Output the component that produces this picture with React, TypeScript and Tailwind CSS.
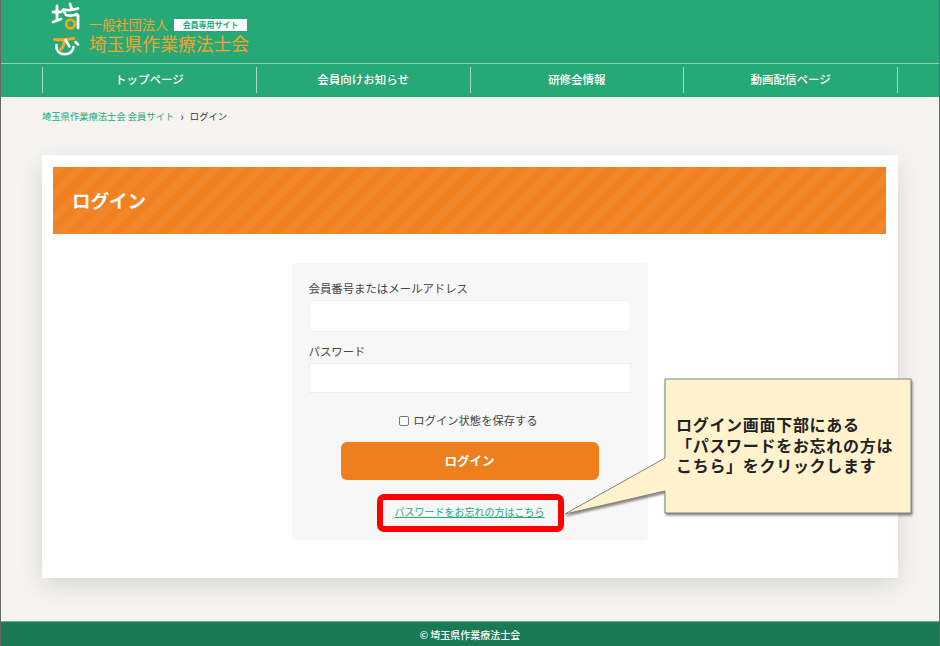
const jp = "font-['Noto_Sans_CJK_JP','Noto_Sans','Liberation_Sans',sans-serif]";

function Logo() {
  return (
    <svg width="30" height="56" viewBox="0 0 30 56" fill="none" className="shrink-0">
      <g stroke="#ffffff" strokeWidth="2.800" strokeLinecap="round" strokeLinejoin="round">
        <path d="M2 10h8M6 4v14M2 20l8-3" />
        <path d="M13 7.500c4 1 9 .5 14-1M19 2l2 5.500M15 13c4 1 8 .5 11-.5M12 8l2 3M25 12l2 2" />
        <path d="M27 14v12" />
      </g>
      <circle cx="19.500" cy="22" r="4.300" stroke="#f5a623" strokeWidth="2.800" />
      <g stroke="#f5a623" strokeWidth="3" strokeLinecap="round">
        <path d="M3.500 37.500c6 .5 13 0 19-1" />
        <path d="M13 37.500c.5 5-.5 8-3.500 10" />
      </g>
      <path d="M14.500 38l4 6.500" stroke="#fff" strokeWidth="2.400" strokeLinecap="round" />
      <path d="M5.500 43c-1 8 6 10.500 12 8.500 3-1 4.500-3.500 5-6.500M24.500 40l2.500 2.500" stroke="#fff" strokeWidth="2.600" strokeLinecap="round" />
    </svg>
  );
}

export default function App() {
  const nav = ["トップページ", "会員向けお知らせ", "研修会情報", "動画配信ページ"];
  return (
    <div className={`${jp} relative flex h-[646px] w-[940px] flex-col overflow-hidden border-x border-[#666] bg-[#f5f4f0] text-[#333]`}>
      <header className="flex h-[63px] items-start bg-[#27a877] pl-[50px] pt-[2px]">
        <Logo />
        <div className="ml-[8px] mt-[15px] flex flex-col">
          <div className="flex items-center">
            <span className="text-[13.200px] leading-[16px] text-[#f3a42c]">一般社団法人</span>
            <span className="ml-[6px] flex h-[12px] w-[73px] items-center justify-center bg-white text-[8px] font-bold text-[#27a877]">会員専用サイト</span>
          </div>
          <span className="mt-[-2px] text-[17.800px] leading-[24px] text-[#f3a42c]">埼玉県作業療法士会</span>
        </div>
      </header>
      <nav className="flex h-[34px] items-center justify-center border-y border-t-[#8fd0b5] border-b-[#27a877] bg-[#27a877]">
        <div className="flex h-[26px] w-[856px] border-r border-[#a9d9c5]">
          {nav.map((n) => (
            <a key={n} className="flex flex-1 items-center justify-center border-l border-[#a9d9c5] text-[11.500px] font-medium text-white">{n}</a>
          ))}
        </div>
      </nav>
      <main className="flex flex-1 flex-col px-[41px]">
        <div className="flex h-[58px] items-center pb-[19px] text-[9.300px]">
          <span className="text-[#27a877]">埼玉県作業療法士会 会員サイト</span>
          <span className="mx-[6px] text-[11px] font-bold leading-none text-[#555]">›</span>
          <span>ログイン</span>
        </div>
        <section className="flex h-[423px] flex-col items-center bg-white pl-[11px] pr-[12px] pt-[12px] shadow-[0_8px_24px_rgba(0,0,0,0.12)]">
          <div className="flex h-[67px] w-full items-center bg-[#f08020] bg-[repeating-linear-gradient(135deg,rgba(255,255,255,0.05)_0,rgba(255,255,255,0.05)_8px,transparent_8px,transparent_16px)] pl-[19px] text-[18.500px] font-bold text-white">ログイン</div>
          <div className="mt-[29px] flex h-[277px] w-[356px] flex-col rounded-[5px] bg-[#f7f7f7] px-[17px] pt-[17px]">
            <label className="text-[11.400px] leading-[17px] text-[#444]">会員番号またはメールアドレス</label>
            <div className="mt-[3px] h-[32px] rounded-[5px] border border-[#eeeeee] bg-white" />
            <label className="mt-[11px] text-[11.400px] leading-[17px] text-[#444]">パスワード</label>
            <div className="mt-[3px] h-[30px] border border-[#eeeeee] bg-white" />
            <div className="mt-[19px] flex items-center justify-center pr-[2px] text-[11.300px] leading-[17px] text-[#444]">
              <span className="mr-[4px] h-[10px] w-[10px] rounded-[2px] border border-[#777] bg-white" />
              ログイン状態を保存する
            </div>
            <button className="mx-auto mt-[13px] h-[38px] w-[258px] rounded-[6px] bg-[#ef7e1d] pt-[1px] text-[12.500px] font-bold text-white">ログイン</button>
            <a className="mt-[24px] text-center text-[10px] leading-[15px] text-[#27a877] underline">パスワードをお忘れの方はこちら</a>
          </div>
        </section>
      </main>
      <footer className="flex h-[25px] items-center justify-center border-t border-[#6fa98f] bg-[#1a7a56] text-[10px] font-medium text-white">© 埼玉県作業療法士会</footer>

      <div className="absolute left-[376px] top-[494px] h-[38px] w-[187px] rounded-[7px] border-[6px] border-[#ff0000]" />
      <svg className="absolute left-[555px] top-[370px] overflow-visible" width="370" height="160" fill="none">
        <path d="M9 144 L109 88 L109 9 L355 9 L355 143 L109 143 L109 121 Z" fill="#fff2cc" stroke="#808080" strokeWidth="1" style={{ filter: "drop-shadow(1px 2px 1px rgba(0,0,0,0.45))" }} />
      </svg>
      <div className="absolute left-[675px] top-[414px] text-[16px] font-bold leading-[20.500px] tracking-[0.700px] text-[#222]">
        ログイン画面下部にある<br />「パスワードをお忘れの方は<br />こちら」をクリックします
      </div>
    </div>
  );
}
